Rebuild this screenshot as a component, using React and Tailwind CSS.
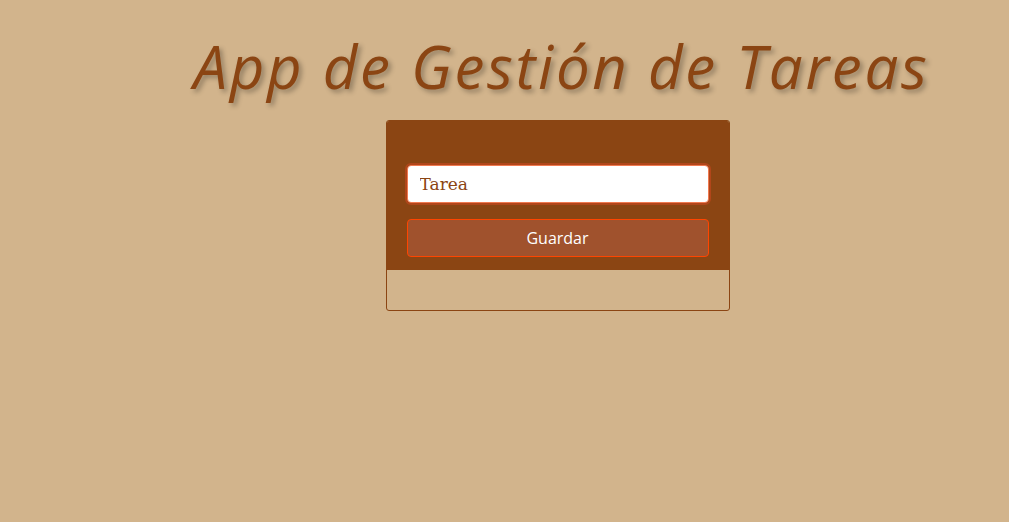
export default function App() {
  return (
    <div className="min-h-screen w-full bg-[#d2b48c] pl-[106px]">
      <div className="flex flex-col items-center pt-[30px]">
        <h1
          className="ml-[8px] text-[60px] leading-[72px] italic font-normal tracking-[2.7px] text-[#8b4513] [text-shadow:3px_3px_5px_rgba(0,0,0,0.3)]"
          style={{ fontFamily: '"Open Sans", "Noto Sans", sans-serif' }}
        >
          App de Gestión de Tareas
        </h1>
        <div className="mt-[18px] w-[344px] rounded-[3px] border border-[#8b4513] overflow-hidden">
          <form
            className="flex flex-col bg-[#8b4513] px-[20px] pt-[44px] pb-[13px]"
            onSubmit={(e) => e.preventDefault()}
          >
            <input
              autoFocus
              type="text"
              placeholder="Tarea"
              className="h-[38px] w-full rounded-[4px] border border-[#f07a50] bg-white px-[12px] text-[17px] text-[#8b4513] placeholder:text-[#8b4513] outline-2 outline-[#b1461a] [font-family:'DejaVu_Serif',serif]"
            />
            <button
              type="submit"
              className="mt-[16px] h-[38px] w-full rounded-[4px] border border-[#ff4500] bg-[#a0522d] text-[16px] text-white [font-family:'Open_Sans',sans-serif]"
            >
              Guardar
            </button>
          </form>
          <div className="h-[40px]" />
        </div>
      </div>
    </div>
  );
}
